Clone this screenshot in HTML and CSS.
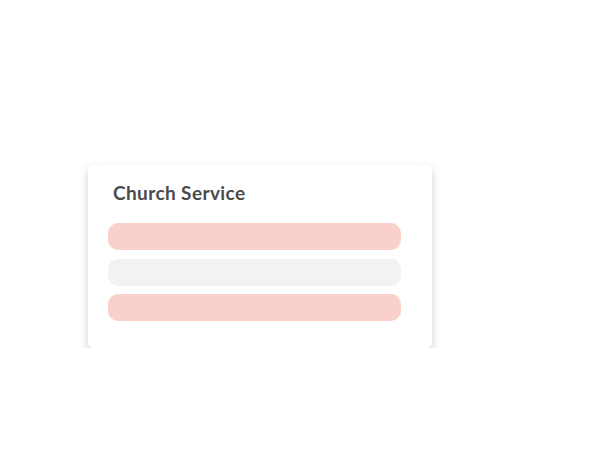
FILE: index.html
```html
<!DOCTYPE html>
<html lang="en">
<head>
<meta charset="UTF-8">
<meta name="viewport" content="width=device-width, initial-scale=1.0">
<title>Church Service</title>
<link rel="stylesheet" href="styles.css">
</head>
<body>

<div class="stage">
  <div class="card">
    <h1 class="card-title">Church Service</h1>
    <div class="bars">
      <div class="bar bar-pink"></div>
      <div class="bar bar-grey"></div>
      <div class="bar bar-pink"></div>
    </div>
  </div>
</div>

</body>
</html>
```

FILE: styles.css
```css
body {
  margin: 0;
  padding: 0;
  background-color: #fff;
  font-family: Lato, "Open Sans", Arial, sans-serif;
}
.stage {
  padding: 165px 0 0 88px;
}
.card {
  width: 344px;
  height: 183px;
  box-sizing: border-box;
  padding: 17px 31px 0 20px;
  background-color: #fff;
  border-radius: 5px;
  box-shadow: 0 4px 10px rgba(0, 0, 0, 0.2);
}
.card-title {
  margin: 0 0 0 5px;
  font-size: 19px;
  line-height: 22px;
  font-weight: 700;
  letter-spacing: 0.4px;
  color: #4a4a4a;
}
.bars {
  display: flex;
  flex-direction: column;
  gap: 8.5px;
  margin-top: 19px;
}
.bar {
  height: 27px;
  border-radius: 10px;
}
.bar-pink {
  background-color: #f9d0ca;
}
.bar-grey {
  background-color: #f2f2f2;
}
```
